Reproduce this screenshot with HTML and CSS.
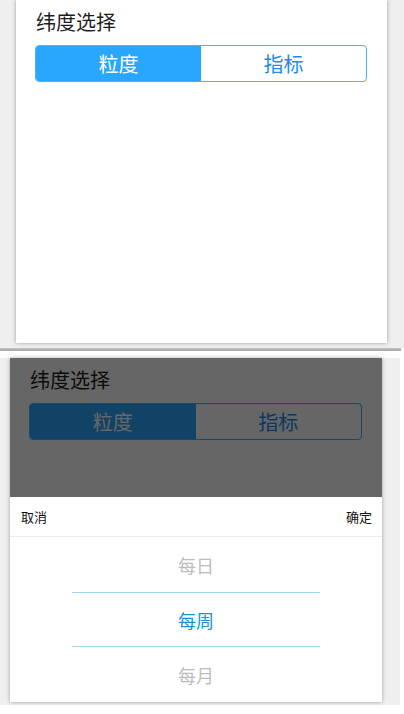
FILE: index.html
```html
<!DOCTYPE html>
<html lang="zh-CN">
<head>
<meta charset="utf-8">
<title>纬度选择</title>
<link rel="stylesheet" href="styles.css">
</head>
<body>
  <section class="shot shot-top">
    <div class="card">
      <h2 class="title">纬度选择</h2>
      <div class="seg">
        <div class="seg-item active">粒度</div>
        <div class="seg-item">指标</div>
      </div>
    </div>
  </section>
  <div class="rule"></div>
  <div class="gap"></div>
  <section class="shot shot-bottom">
    <div class="card card-modal">
      <h2 class="title">纬度选择</h2>
      <div class="seg">
        <div class="seg-item active">粒度</div>
        <div class="seg-item">指标</div>
      </div>
      <div class="mask"></div>
      <div class="sheet">
        <div class="sheet-head">
          <span class="btn">取消</span>
          <span class="btn">确定</span>
        </div>
        <div class="picker">
          <div class="opt">每日</div>
          <div class="opt selected">每周</div>
          <div class="opt">每月</div>
        </div>
      </div>
    </div>
  </section>
</body>
</html>
```

FILE: styles.css
```css
* { box-sizing: border-box; }
html, body {
  margin: 0;
  padding: 0;
  background: #fff;
  font-family: "Noto Sans CJK SC", "Noto Sans", sans-serif;
}
.shot {
  background: #efefef;
}
.shot-top {
  padding: 0 17px 5px 16px;
}
.shot-bottom {
  width: 400px;
  padding: 0 18px 3px 10px;
}
.card {
  background: #fff;
  height: 343px;
  padding: 8px 20px 0 19px;
  box-shadow: 0 0 4px rgba(0, 0, 0, 0.35);
}
.card-modal {
  position: relative;
  height: 344px;
  overflow: hidden;
}
.title {
  margin: 0 0 9px 1px;
  font-size: 20px;
  line-height: 28px;
  font-weight: normal;
  color: #1e1e1e;
}
.seg {
  display: flex;
  height: 37px;
  border: 1px solid #49b3ff;
  border-radius: 4px;
  overflow: hidden;
}
.seg-item {
  flex: 1;
  display: flex;
  align-items: center;
  justify-content: center;
  font-size: 20px;
  color: #1a8cf0;
}
.seg-item.active {
  background: #29a7ff;
  color: #fff;
}
.rule {
  height: 3px;
  background: linear-gradient(#c4c4c4, #a4a4a4);
  margin-right: 3px;
}
.gap {
  height: 7px;
}
.mask {
  position: absolute;
  inset: 0;
  background: rgba(0, 0, 0, 0.6);
}
.sheet {
  position: absolute;
  left: 0;
  right: 0;
  bottom: 0;
  height: 205px;
  background: #fff;
}
.sheet-head {
  height: 40px;
  display: flex;
  align-items: center;
  justify-content: space-between;
  padding: 0 10px 0 11px;
  border-bottom: 1px solid #ededed;
  font-size: 13px;
  color: #111;
}
.opt {
  height: 55px;
  display: flex;
  align-items: center;
  justify-content: center;
  font-size: 18px;
  color: #bdbdbd;
}
.opt.selected {
  margin: 0 62px;
  border-top: 1px solid #9fd8f1;
  border-bottom: 1px solid #9fd8f1;
  color: #1a90d6;
}
```
